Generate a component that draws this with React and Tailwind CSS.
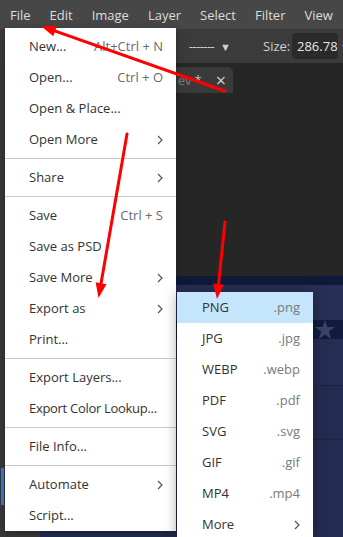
import React from 'react';

const topMenus = ['File', 'Edit', 'Image', 'Layer', 'Select', 'Filter', 'View'];

const fileMenu = [
  { label: 'New...', shortcut: 'Alt+Ctrl + N' },
  { label: 'Open...', shortcut: 'Ctrl + O' },
  { label: 'Open & Place...' },
  { label: 'Open More', sub: true },
  { sep: true },
  { label: 'Share', sub: true },
  { sep: true },
  { label: 'Save', shortcut: 'Ctrl + S' },
  { label: 'Save as PSD' },
  { label: 'Save More', sub: true },
  { label: 'Export as', sub: true },
  { label: 'Print...' },
  { sep: true },
  { label: 'Export Layers...' },
  { label: 'Export Color Lookup...' },
  { sep: true },
  { label: 'File Info...' },
  { sep: true },
  { label: 'Automate', sub: true },
  { label: 'Script...' },
];

const exportMenu = [
  { label: 'PNG', ext: '.png', active: true },
  { label: 'JPG', ext: '.jpg' },
  { label: 'WEBP', ext: '.webp' },
  { label: 'PDF', ext: '.pdf' },
  { label: 'SVG', ext: '.svg' },
  { label: 'GIF', ext: '.gif' },
  { label: 'MP4', ext: '.mp4' },
  { label: 'More', sub: true },
];

const Chevron = () => (
  <svg width="6" height="10" viewBox="0 0 6 10" className="shrink-0">
    <polyline points="1,1 5,5 1,9" fill="none" stroke="#555" strokeWidth="1.2" />
  </svg>
);

// red annotation arrow, head computed from the line direction
const Arrow = ({ x1, y1, x2, y2 }) => {
  const dx = x2 - x1;
  const dy = y2 - y1;
  const len = Math.hypot(dx, dy);
  const ux = dx / len;
  const uy = dy / len;
  const L = 15;
  const W = 5.5;
  const bx = x2 - ux * L;
  const by = y2 - uy * L;
  const pts = `${x2},${y2} ${bx - uy * W},${by + ux * W} ${bx + uy * W},${by - ux * W}`;
  return (
    <g>
      <line x1={x1} y1={y1} x2={bx + ux * 2} y2={by + uy * 2} stroke="#ff0000" strokeWidth="3" strokeLinecap="round" />
      <polygon points={pts} fill="#ff0000" />
    </g>
  );
};

export default function App() {
  return (
    <div className="relative w-[343px] h-[537px] overflow-hidden bg-[#262626] font-['Open_Sans',sans-serif] text-[13px] leading-none whitespace-nowrap">
      {/* Menu bar */}
      <div className="flex h-[29px] items-center gap-[19px] bg-[#474747] pl-[10px] pt-[1px] text-[#dcdcdc]">
        {topMenus.map((m) => (
          <span key={m}>{m}</span>
        ))}
      </div>

      {/* Options bar */}
      <div className="flex h-[34px] items-center bg-[#3b3b3b] pl-[189px] text-[#d0d0d0]">
        <div className="flex w-[74px] shrink-0 items-center">
          <span className="tracking-[-0.6px]">-------</span>
          <span className="ml-[6px] text-[11px]">▼</span>
        </div>
        <span className="w-[29px] shrink-0">Size:</span>
        <div className="flex h-[26px] w-[46px] shrink-0 items-center overflow-hidden rounded-[4px] bg-[#2a2a2a] pl-[5px] text-[#e6e6e6]">
          286.78
        </div>
        <span className="ml-[2px] text-[11px]">▼</span>
      </div>

      {/* Workspace */}
      <div className="flex h-[474px]">
        <div className="flex w-[40px] shrink-0 flex-col bg-[#393939]">
          <div className="h-[405px]" />
          <div className="ml-[1px] h-[37px] w-[3px] bg-[#3b7ddd]" />
        </div>

        <div className="flex flex-1 flex-col">
          <div className="flex h-[30px] items-end pl-[132px]">
            <div className="flex h-[26px] w-[61px] items-center justify-end overflow-hidden rounded-t-[5px] bg-[#3a3a3a] pr-[7px]">
              <span className="text-[#7d7d7d]">ev</span>
              <span className="ml-[3px] text-[#bdbdbd]">*</span>
              <span className="ml-[14px] text-[18px] text-[#d0d0d0]">×</span>
            </div>
          </div>

          <div className="h-[183px] bg-[#262626]" />

          {/* image on canvas */}
          <div className="flex flex-1 flex-col bg-[#252e52]">
            <div className="h-[9px] bg-[#0f1a3b]" />
            <div className="h-[35px] bg-[#262f55]" />
            <div className="flex h-[19px] items-center justify-end bg-[#111b3d] pr-[8px]">
              <svg width="20" height="19" viewBox="0 0 20 19">
                <polygon points="10,0 12.4,7 20,7 13.8,11.5 16.2,19 10,14.4 3.8,19 6.2,11.5 0,7 7.6,7" fill="#3a4466" />
              </svg>
            </div>
            <div className="h-[47px] border-b border-[#1c2545] bg-[#252e52]" />
            <div className="h-[54px] border-b border-[#1c2545] bg-[#232c50]" />
            <div className="flex-1 bg-[#242d51]" />
          </div>
        </div>
      </div>

      {/* File menu */}
      <div className="absolute left-[5px] top-[28px] w-[171px] bg-white pt-[3px] text-[#333] shadow-[0_2px_8px_rgba(0,0,0,0.35)]">
        {fileMenu.map((item, i) =>
          item.sep ? (
            <div key={i} className="my-[3px] h-px bg-[#c8c8c8]" />
          ) : (
            <div key={i} className="flex h-[31px] items-center justify-between pl-[24px] pr-[13px]">
              <span className={item.label.length > 20 ? 'tracking-[-0.3px]' : ''}>{item.label}</span>
              {item.shortcut && <span className="text-[#6a6a6a]">{item.shortcut}</span>}
              {item.sub && <Chevron />}
            </div>
          )
        )}
      </div>

      {/* Export as submenu */}
      <div className="absolute left-[177px] top-[292px] w-[136px] bg-white text-[#333] shadow-[0_2px_12px_rgba(0,0,0,0.35)]">
        {exportMenu.map((item) => (
          <div
            key={item.label}
            className={`flex h-[31px] items-center justify-between pl-[25px] pr-[13px] ${item.active ? 'bg-[#c4e5fb]' : ''}`}
          >
            <span>{item.label}</span>
            {item.ext && <span className="text-[#7a7a7a]">{item.ext}</span>}
            {item.sub && <Chevron />}
          </div>
        ))}
      </div>

      {/* Annotation arrows */}
      <svg className="pointer-events-none absolute inset-0" width="343" height="537">
        <Arrow x1={225} y1={91} x2={41} y2={26} />
        <Arrow x1={127} y1={134} x2={98.5} y2={298} />
        <Arrow x1={225} y1={222} x2={217} y2={299} />
      </svg>
    </div>
  );
}
